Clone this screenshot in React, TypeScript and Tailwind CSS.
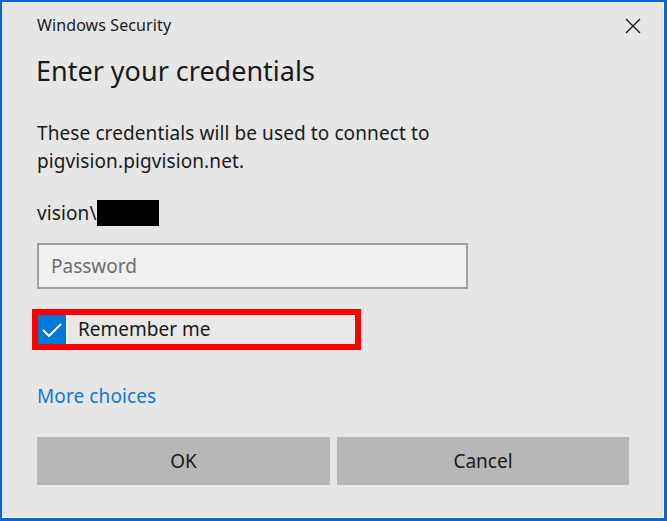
import React from "react";

export default function App() {
  return (
    <div
      className="w-[667px] h-[521px] bg-[#0a64d2] overflow-hidden"
      style={{ fontFamily: '"Noto Sans", "Open Sans", sans-serif' }}
    >
      <div className="ml-[2px] mt-[2px] w-[662px] h-[516px] bg-[#e6e6e6] border-r border-b border-[#f4f4f4] flex flex-col text-[#1a1a1a]">
        <div className="flex items-start justify-between h-[38px]">
          <div className="ml-[35px] mt-[13px] text-[16px] leading-[20px] text-[#1a1a1a] tracking-[0.1px]">
            Windows Security
          </div>
          <div className="mr-[21px] mt-[15px] w-[18px] h-[18px] flex items-center justify-center">
            <svg width="16" height="16" viewBox="0 0 16 16">
              <path d="M1 1 L15 15 M15 1 L1 15" stroke="#1a1a1a" strokeWidth="1.4" fill="none" />
            </svg>
          </div>
        </div>
        <div className="ml-[34px] mt-[15px] text-[27px] leading-[32px] tracking-[0px]">
          Enter your credentials
        </div>
        <div className="ml-[35px] mt-[32px] text-[19px] leading-[28px] tracking-[0.1px]">
          <div>These credentials will be used to connect to</div>
          <div>pigvision.pigvision.net.</div>
        </div>
        <div className="ml-[35px] mt-[24px] flex items-center h-[28px] text-[19px] tracking-[0.1px]">
          <span>vision\</span>
          <span className="inline-block w-[62px] h-[26px] bg-black" />
        </div>
        <div className="ml-[35px] mt-[16px] w-[431px] h-[46px] border-2 border-[#a0a0a0] bg-[#f0f0f0] flex items-center pl-[12px] text-[19px] text-[#6d6d6d] tracking-[0px]">
          Password
        </div>
        <div className="ml-[30px] mt-[20px] w-[329px] h-[41px] border-[6px] border-[#ff0000] flex items-center">
          <div className="w-[28px] h-[29px] bg-[#0078d7] flex items-center justify-center">
            <svg width="22" height="18" viewBox="0 0 22 18">
              <path d="M2 9 L8 15 L20 3" stroke="#ffffff" strokeWidth="2" fill="none" />
            </svg>
          </div>
          <div className="flex-1 h-full bg-[#e8e8e8] border-l-2 border-[#f2f2f2] flex items-center pl-[10px] text-[19px] tracking-[0px]">
            Remember me
          </div>
        </div>
        <div className="ml-[35px] mt-[32px] text-[19px] leading-[28px] text-[#0f78d4] tracking-[0.1px]">
          More choices
        </div>
        <div className="ml-[35px] mt-[27px] flex gap-[7px]">
          <div className="w-[293px] h-[48px] bg-[#b7b7b7] flex items-center justify-center text-[19px]">
            OK
          </div>
          <div className="w-[292px] h-[48px] bg-[#b7b7b7] flex items-center justify-center text-[19px]">
            Cancel
          </div>
        </div>
      </div>
    </div>
  );
}
